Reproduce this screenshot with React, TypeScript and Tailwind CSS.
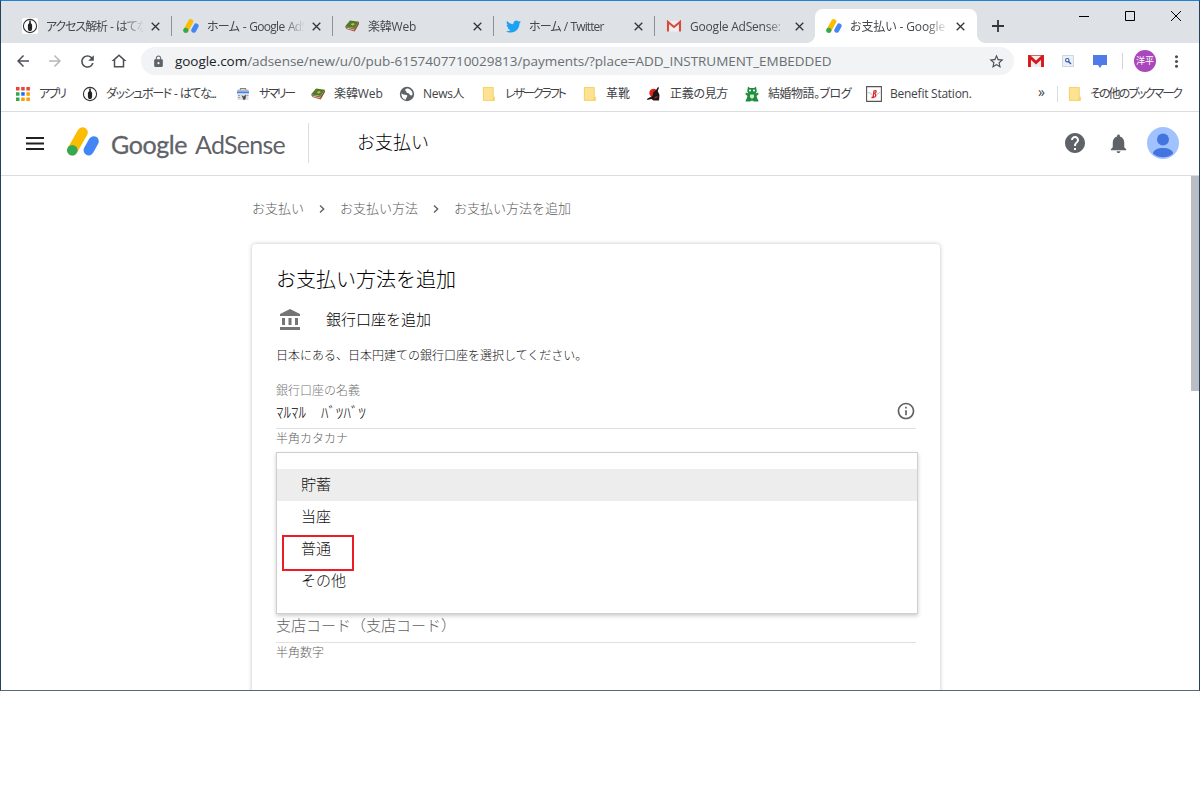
import type { ReactNode } from "react";
import clsx from "clsx";
import { FaTwitter } from "react-icons/fa";
import {
  MdAccountBalance,
  MdArrowBack,
  MdArrowForward,
  MdHelp,
  MdInfoOutline,
  MdLock,
  MdMoreVert,
  MdNotifications,
  MdRefresh,
  MdStarBorder,
} from "react-icons/md";

function AdSenseLogo({ className }: { className: string }) {
  return (
    <svg viewBox="0 0 32 29" className={className}>
      <path d="M5.4 23.3L15.6 5.4" stroke="#fbbc04" strokeWidth="10.4" strokeLinecap="round" />
      <path d="M21.7 23.3l5-9" stroke="#4285f4" strokeWidth="10.2" strokeLinecap="round" />
      <circle cx="5.3" cy="23.3" r="5.3" fill="#34a853" />
    </svg>
  );
}

function PenIcon() {
  return (
    <svg viewBox="0 0 16 16" className="size-4">
      <rect width="16" height="16" rx="2" fill="#fff" />
      <circle cx="8" cy="8" r="6.6" fill="none" stroke="#333" strokeWidth="1.1" />
      <path d="M7.2 2.5h1.6v2.6l1.3 1.6V11l-.9 2H6.8l-.9-2V6.700l1.300-1.600z" fill="#222" />
    </svg>
  );
}

function BookIcon() {
  return (
    <svg viewBox="0 0 16 16" className="size-4">
      <path d="M1 8.500L6 2.500l9 1.300L10.500 10z" fill="#4d7a2b" />
      <path d="M1 8.500L10.500 10.500 15 3.800V6l-4.300 7.500L2.500 11z" fill="#8a4b2a" />
      <path d="M2.500 10l8 2" stroke="#eadfc8" strokeWidth=".8" />
      <path d="M6.500 6l3-1L11 6.300 8.500 7.800z" fill="#d8b13c" />
    </svg>
  );
}

function GmailIcon() {
  return (
    <svg viewBox="0 0 16 16" className="size-4">
      <path d="M1 3h14v10.500H1z" fill="#f1eeee" />
      <path d="M2 13.500V4l6 5 6-5v9.500" fill="none" stroke="#d54b3d" strokeWidth="2.100" />
    </svg>
  );
}

function AppsIcon() {
  return (
    <svg viewBox="0 0 14 14" className="size-3.5">
      <path d="M0 0h3.500v3.500H0zM5.200 0h3.500v3.500H5.200zM10.400 0h3.500v3.500h-3.500z" fill="#ea4335" />
      <path d="M0 5.200h3.500v3.500H0zM0 10.400h3.500v3.500H0z" fill="#34a853" />
      <path d="M5.200 5.200h3.500v3.500H5.200z" fill="#1a73e8" />
      <path d="M10.400 5.200h3.500v3.500h-3.500zM5.200 10.400h3.500v3.500H5.200zM10.400 10.400h3.500v3.500h-3.500z" fill="#fb9d04" />
    </svg>
  );
}

function SummaryIcon() {
  return (
    <svg viewBox="0 0 16 16" className="size-4">
      <path d="M5.500 4V2.500h5V4" fill="none" stroke="#7c8288" strokeWidth="1.200" />
      <path d="M3 3.500h10l1.500 2h-13z" fill="#b4b8bd" />
      <path d="M2 5.500h12v2H2z" fill="#3b82f0" />
      <path d="M2.500 7.500h11V14h-11z" fill="#dcdfe2" />
      <path d="M3 9.500h2M3 11.500h2M11.500 9.500h2" stroke="#9aa0a6" />
      <path d="M6.500 9l2 1.500L11 8.500 10.500 13l-1.800 1.200z" fill="#44494e" />
    </svg>
  );
}

function GlobeIcon() {
  return (
    <svg viewBox="0 0 16 16" className="size-4">
      <circle cx="8" cy="8" r="7.200" fill="#5f6368" />
      <path d="M2.300 7.500C4 8 5 9 7.500 9c1 .3 1 1.500.2 2L6.500 13.700C4 13 2.300 11 2.300 7.500zM8 2.500c-2 .5-2.500 2-1 2.800 1 .4 0 1.500 1.500 1.700 2 .3 1.500 1 2.500 2s2 .3 2.600-.8C13.500 5 11 2.500 8 2.500z" fill="#fff" />
    </svg>
  );
}

function FolderIcon() {
  return (
    <svg viewBox="0 0 14 14" className="size-3.5">
      <path d="M1 0h10.500v9.500h1.200v4.200H1z" fill="#fde293" />
      <path d="M1.400.4h9.800v9.400M1.400.4v13M1.400 13.400h10.400" fill="none" stroke="#f5cd5b" strokeWidth=".8" />
      <path d="M10.500 10h2.200v3.700h-2.200z" fill="#f7d264" />
    </svg>
  );
}

function SamuraiIcon() {
  return (
    <svg viewBox="0 0 16 16" className="size-4">
      <circle cx="7.500" cy="7" r="4.200" fill="#e3211c" />
      <path d="M12 1l1 .8-1.300 3.200L13.500 9l-.5 5.500H7.500l-2-1.500-4.500 1 .5-1.500 5-2.500 1-4L10 4z" fill="#1c1617" />
      <path d="M8.500 12l3-1.500" stroke="#e3211c" strokeWidth="1.100" />
    </svg>
  );
}

function FrogIcon() {
  return (
    <svg viewBox="0 0 14 16" className="w-3.5 h-4">
      <path d="M3 .5L4.800 2h4.400L11 .5l.8 5L10.500 7.500l2.700-1 .3 1.800-2 1.700 1 3 .8 1v1.500H9L7 14.500l-2 1H.7V14l.8-1 1-3-2-1.700.3-1.800 2.700 1L2.200 5.500z" fill="#1e8e3e" />
      <circle cx="5" cy="4.500" r="1.100" fill="#fff" />
      <circle cx="9" cy="4.500" r="1.100" fill="#fff" />
      <path d="M5.200 8.500h3.600l.4 2.500L7 13l-2.200-2z" fill="#cfe6d3" />
    </svg>
  );
}

function BenefitIcon() {
  return (
    <svg viewBox="0 0 16 16" className="size-4">
      <path d="M.6.600h14.800v14.800H.6z" fill="#fff" stroke="#555" strokeWidth="1.100" />
      <path d="M1.500 6.500l3 .5 1 2M14.500 6.500l-3 1-1 2" fill="none" stroke="#b9b9b9" strokeWidth=".9" />
      <path d="M5.500 11.500h1.500l1-6.500q2.500-1.200 2 1-.3 1.300-1.500 1.500 1.700.6 1.200 2.300T7.500 11" fill="none" stroke="#d9252a" strokeWidth="1.300" />
    </svg>
  );
}

function CrossIcon({ className }: { className: string }) {
  return (
    <svg viewBox="0 0 10 10" className={className}>
      <path d="M.8.800l8.400 8.400M9.200.8L.8 9.200" stroke="currentColor" strokeWidth="1.500" />
    </svg>
  );
}

const adsenseFavicon = <AdSenseLogo className="w-4 h-3.5 overflow-visible" />;

const tabs = [
  { icon: <PenIcon />, title: "アクセス解析 - はてな", tracking: "tracking-[-1.1px] [word-spacing:1px]", divider: true },
  { icon: adsenseFavicon, title: "ホーム - Google AdS", tracking: "tracking-[-0.7px] [word-spacing:1px]", divider: true },
  { icon: <BookIcon />, title: "楽韓Web", tracking: "tracking-[-0.2px]", divider: true },
  { icon: <FaTwitter className="size-[15px] text-[#1da1f2]" />, title: "ホーム / Twitter", tracking: "tracking-[-0.9px] [word-spacing:1px]", divider: true },
  { icon: <GmailIcon />, title: "Google AdSense: ", tracking: "tracking-[-0.2px]" },
  { icon: adsenseFavicon, title: "お支払い - Google", tracking: "tracking-[-0.1px]", active: true },
];

const bookmarks = [
  { icon: <AppsIcon />, title: "アプリ", width: "w-[67px]", tracking: "tracking-[-2px]" },
  { icon: <PenIcon />, title: "ダッシュボード - はてな...", width: "w-[153px]", tracking: "tracking-[-1.4px] [word-spacing:1.5px]" },
  { icon: <SummaryIcon />, title: "サマリー", width: "w-[75px]", tracking: "tracking-[-2.2px]" },
  { icon: <BookIcon />, title: "楽韓Web", width: "w-[89px]", tracking: "tracking-[-0.1px]" },
  { icon: <GlobeIcon />, title: "News人", width: "w-[82px]", tracking: "tracking-[-0.3px]" },
  { icon: <FolderIcon />, title: "レザークラフト", width: "w-[101px]", tracking: "tracking-[-2.100px]" },
  { icon: <FolderIcon />, title: "革靴", width: "w-[64px]", tracking: "tracking-normal" },
  { icon: <SamuraiIcon />, title: "正義の見方", width: "w-[98px]", tracking: "tracking-[-0.3px]" },
  { icon: <FrogIcon />, title: "結婚物語。ブログ", width: "w-[122px]", tracking: "tracking-[-0.5px]" },
  { icon: <BenefitIcon />, title: "Benefit Station.", width: "w-[160px]", tracking: "tracking-[-0.25px]" },
];

const accountTypes = ["貯蓄", "当座", "普通", "その他"];

type TabProps = {
  icon: ReactNode;
  title: string;
  tracking: string;
  divider?: boolean;
  active?: boolean;
};

function Tab({ icon, title, tracking, divider, active }: TabProps) {
  return (
    <div
      className={clsx(
        "relative flex items-center h-[34px] pl-[11px] shrink-0",
        active ? "w-[162px] -ml-px bg-white rounded-t-lg" : "w-[161px]"
      )}
    >
      <span className="flex items-center justify-center w-4 shrink-0">{icon}</span>
      <span
        className={clsx(
          "ml-2 w-[98px] pt-0.5 shrink-0 overflow-hidden whitespace-nowrap text-[12px] text-[#45494d] [mask-image:linear-gradient(to_right,#000_78%,transparent)]",
          tracking
        )}
      >
        {title}
      </span>
      <CrossIcon className={clsx("size-[9px] text-[#333639]", active ? "ml-2" : "ml-[7px]")} />
      {divider && <span className="ml-auto w-px h-5 bg-[#8d9297]" />}
      {active && (
        <>
          <span className="absolute bottom-0 -left-2 size-2 bg-[radial-gradient(circle_at_0_0,transparent_7.5px,#fff_8px)]" />
          <span className="absolute bottom-0 -right-2 size-2 bg-[radial-gradient(circle_at_100%_0,transparent_7.5px,#fff_8px)]" />
        </>
      )}
    </div>
  );
}

function TabStrip() {
  return (
    <div className="flex items-end h-[42px] pl-[10px] bg-[#dee1e6]">
      {tabs.map((tab, i) => (
        <Tab key={i} {...tab} />
      ))}
      <svg viewBox="0 0 12 12" className="size-3 ml-[15px] mb-[11px]">
        <path d="M6 0v12M0 6h12" stroke="#33363a" strokeWidth="1.800" />
      </svg>
      <div className="flex items-center ml-auto mb-[22px] mr-[18px] text-black">
        <svg viewBox="0 0 10 10" className="size-2.5">
          <path d="M0 5.500h10" stroke="currentColor" />
        </svg>
        <svg viewBox="0 0 10 10" className="size-2.5 ml-[36px]">
          <path d="M.5.500h9v9h-9z" fill="none" stroke="currentColor" />
        </svg>
        <svg viewBox="0 0 10 10" className="size-2.5 ml-[36px]">
          <path d="M0 0l10 10M10 0L0 10" stroke="currentColor" />
        </svg>
      </div>
    </div>
  );
}

function AddressBar() {
  return (
    <div className="flex items-center h-9 pl-[13px] text-[#4d5156]">
      <MdArrowBack className="size-[18px]" />
      <MdArrowForward className="size-[18px] ml-[14px] text-[#b5b8bb]" />
      <MdRefresh className="size-[19px] ml-[14px]" />
      <svg viewBox="0 0 24 24" className="size-[18px] ml-[13px]">
        <path d="M12 3L2 12h3v8.500h14V12h3L12 3zm5 15.500H7v-8.300l5-4.500 5 4.500v8.300z" fill="currentColor" />
      </svg>
      <div className="flex items-center w-[873px] h-7 ml-[13px] pl-[11px] pr-[9px] rounded-full bg-[#f1f3f4]">
        <MdLock className="size-[13px] text-[#5f6368]" />
        <span className="ml-[10px] whitespace-nowrap text-[13.5px] tracking-[-0.04px] text-[#6b6f73]">
          <span className="text-[#202124]">google.com</span>
          /adsense/new/u/0/pub-6157407710029813/payments/?place=ADD_INSTRUMENT_EMBEDDED
        </span>
        <MdStarBorder className="size-[17px] ml-auto" />
      </div>
      <svg viewBox="0 0 16 12" className="w-4 h-3 ml-[14px]">
        <path d="M0 0h16v12H0z" fill="#eee" />
        <path d="M1.500 12V1.500l6.500 6 6.500-6V12" fill="none" stroke="#d8171b" strokeWidth="2.900" />
        <path d="M0 .4h16" stroke="#c9302c" strokeWidth=".8" />
      </svg>
      <svg viewBox="0 0 12 12" className="size-3 ml-[18px]">
        <path d="M.5.500h11v11H.5z" fill="#eaf0f8" stroke="#cdd5df" />
        <circle cx="5.300" cy="5.200" r="1.700" fill="#fff" stroke="#3458a8" strokeWidth="1.100" />
        <path d="M6.500 6.500L9 9" stroke="#3458a8" strokeWidth="1.400" />
      </svg>
      <svg viewBox="0 0 14 13" className="w-3.5 h-[13px] ml-[19px]">
        <path d="M0 0h14v10H9l-2 3-2-3H0z" fill="#4f7be8" />
      </svg>
      <span className="w-px h-4 ml-[15px] bg-[#d0d3d6]" />
      <span className="flex items-center justify-center size-[22px] ml-[11px] rounded-full bg-[#ab47bc] text-[9px] text-white">
        洋平
      </span>
      <MdMoreVert className="size-[19px] ml-[11px]" />
    </div>
  );
}

function BookmarksBar() {
  return (
    <div className="flex items-center h-[33px] pl-[14px] pb-[3px] text-[12px] text-[#3f4347] border-b border-[#dadce0]">
      {bookmarks.map((bookmark) => (
        <div key={bookmark.title} className={clsx("flex items-center shrink-0 whitespace-nowrap", bookmark.width)}>
          <span className="flex justify-center w-4 mr-2 shrink-0">{bookmark.icon}</span>
          <span className={bookmark.tracking}>{bookmark.title}</span>
        </div>
      ))}
      <span className="ml-[12px] w-3 text-[14px] leading-4 pb-1">»</span>
      <span className="w-px h-4 ml-[7px] mr-[10px] bg-[#dadce0]" />
      <FolderIcon />
      <span className="ml-2 whitespace-nowrap tracking-[-1.900px]">その他のブックマーク</span>
    </div>
  );
}

function Header() {
  return (
    <header className="flex items-center h-16 pl-[25px] pr-5 pb-px border-b border-[#dadce0] shrink-0">
      <svg viewBox="0 0 18 13" className="w-[18px] h-[13px]">
        <path d="M0 1h18M0 6.500h18M0 12h18" stroke="#202124" strokeWidth="1.900" />
      </svg>
      <AdSenseLogo className="w-8 h-[29px] ml-[23px] mb-[4px]" />
      <div className="flex w-[197px] ml-[12px] mt-[3px] font-['Lato'] text-[25px] text-[#5f6368] whitespace-nowrap">
        <span className="w-[84px] tracking-[-0.4px] [-webkit-text-stroke:0.3px_#5f6368]">Google</span>
        <span className="tracking-[-0.75px]">AdSense</span>
      </div>
      <span className="w-px h-10 bg-[#dadce0]" />
      <h1 className="ml-[48px] mb-px text-[18px] font-light text-black">お支払い</h1>
      <div className="flex items-center ml-auto text-[#5f6368]">
        <MdHelp className="size-6" />
        <MdNotifications className="size-[23px] ml-5" />
        <svg viewBox="0 0 32 32" className="size-8 ml-[17px]">
          <circle cx="16" cy="16" r="16" fill="#a0c3ff" />
          <circle cx="16" cy="12.500" r="6" fill="#4374e0" />
          <path d="M6 26.500c0-7.500 20-7.500 20 0v.3a16 16 0 0 1-20 0z" fill="#4374e0" />
        </svg>
      </div>
    </header>
  );
}

function Breadcrumbs() {
  return (
    <nav className="flex items-center h-5 text-[13px] font-light text-[#616161]">
      <span>お支払い</span>
      <Chevron />
      <span>お支払い方法</span>
      <Chevron />
      <span>お支払い方法を追加</span>
    </nav>
  );
}

function Chevron() {
  return (
    <svg viewBox="0 0 6 8" className="w-1.5 h-2 mx-[15px]">
      <path d="M1 .5L4.700 4 1 7.500" fill="none" stroke="#616161" strokeWidth="1.400" />
    </svg>
  );
}

function AccountTypeMenu() {
  return (
    <ul className="absolute left-6 top-[208px] w-[642px] h-[162px] pt-4 bg-white border border-[#cfcfcf] shadow-[0_2px_4px_rgba(0,0,0,0.2)] text-[15px] text-[#111]">
      {accountTypes.map((type, i) => (
        <li key={type} className={clsx("flex items-center h-8 pl-6 pb-0.5", i === 0 && "bg-[#ededed]")}>
          {type}
        </li>
      ))}
      <li className="absolute left-[5px] top-[82px] w-[72px] h-9 border-2 border-[#ec1c24]" />
    </ul>
  );
}

function PaymentCard() {
  return (
    <section className="relative w-[688px] h-[500px] mt-[25px] px-6 pt-[22px] rounded-sm font-light shadow-[0_0_4px_rgba(0,0,0,0.25)]">
      <h2 className="h-7 leading-7 text-[20px] text-black">お支払い方法を追加</h2>
      <div className="flex items-center h-6 mt-[14px] text-[15px] text-black">
        <MdAccountBalance className="size-[24px] ml-[2px] text-[#757575]" />
        <span className="ml-6 pb-0.5">銀行口座を追加</span>
      </div>
      <p className="mt-[14px] h-5 leading-5 text-[12px] text-[#111]">
        日本にある、日本円建ての銀行口座を選択してください。
      </p>
      <div className="mt-[17px] h-4 leading-4 text-[12px] text-[#757575]">銀行口座の名義</div>
      <div className="flex items-center justify-between h-[30px] w-[640px] pb-[6px] border-b border-[#e0e0e0] text-[15px] text-black">
        <span className="pt-1">ﾏﾙﾏﾙ　ﾊﾞﾂﾊﾞﾂ</span>
        <MdInfoOutline className="size-5 text-[#616161]" />
      </div>
      <div className="mt-[2px] h-4 leading-4 text-[12px] text-[#616161]">半角カタカナ</div>
      <div className="mt-[168px] h-[28px] leading-5 w-[640px] border-b border-[#e0e0e0] text-[15px] text-[#616161]">
        支店コード（支店コード）
      </div>
      <div className="mt-[2px] h-4 leading-4 text-[12px] text-[#616161]">半角数字</div>
      <AccountTypeMenu />
    </section>
  );
}

export default function App() {
  return (
    <div className="h-[790px] bg-white font-['Open_Sans','Noto_Sans_CJK_JP',sans-serif]">
      <div className="flex flex-col h-[691px] border border-[#24415c] border-t-[#1e82d2] border-b-[#56697a] overflow-hidden">
        <div className="[font-feature-settings:'palt'] shrink-0">
          <TabStrip />
          <AddressBar />
          <BookmarksBar />
        </div>
        <Header />
        <main className="flex justify-between flex-1 min-h-0 overflow-hidden">
          <div className="ml-[251px] pt-[23px]">
            <Breadcrumbs />
            <PaymentCard />
          </div>
          <div className="w-2 h-[215px] bg-[#babec4]" />
        </main>
      </div>
    </div>
  );
}
